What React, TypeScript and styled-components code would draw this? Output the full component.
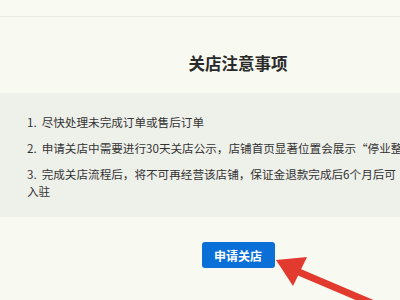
import React from 'react';
import styled, { createGlobalStyle } from 'styled-components';

const GlobalStyle = createGlobalStyle`
  html, body {
    margin: 0;
    padding: 0;
    background: #f8f9f0;
    overflow: hidden;
  }
  body {
    font-family: "Noto Sans CJK SC", "Noto Sans", "Liberation Sans", sans-serif;
    color: #333;
  }
`;

const Page = styled.div`
  position: relative;
  width: 476px;
  height: 300px;
  background: #f8f9f0;
`;

const TopBar = styled.div`
  height: 16px;
  background: #f9faf2;
  border-bottom: 1px solid #ebece3;
`;

const Header = styled.div`
  padding: 36px 0 20px;
  text-align: center;
`;

const Title = styled.h2`
  margin: 0;
  font-size: 16.5px;
  line-height: 20px;
  font-weight: 700;
  color: #2a2a2a;
`;

const NoticePanel = styled.div`
  background: #eef0ea;
  padding: 21px 0 17px 27px;
`;

const NoticeList = styled.ol`
  list-style: none;
  margin: 0;
  padding: 0;
  width: 375px;
  display: flex;
  flex-direction: column;
  gap: 9px;
`;

const NoticeItem = styled.li<{ $nowrap?: boolean }>`
  font-size: 11.6px;
  line-height: 17px;
  color: #333;
  white-space: ${(p) => (p.$nowrap ? 'nowrap' : 'normal')};
`;

const Num = styled.span`
  padding-right: 5px;
`;

const Footer = styled.div`
  display: flex;
  justify-content: center;
  padding-top: 25px;
`;

const ApplyButton = styled.button`
  width: 73px;
  height: 26px;
  border: none;
  border-radius: 3px;
  background: #0b6fd8;
  color: #fff;
  font-family: inherit;
  font-size: 12px;
  font-weight: 700;
  cursor: pointer;
`;

const Arrow = styled.svg`
  position: absolute;
  left: 0;
  top: 0;
  pointer-events: none;
`;

const notices = [
  '尽快处理未完成订单或售后订单',
  '申请关店中需要进行30天关店公示，店铺首页显著位置会展示“停业整顿”',
  '完成关店流程后，将不可再经营该店铺，保证金退款完成后6个月后可入驻',
];

export default function App() {
  return (
    <Page>
      <GlobalStyle />
      <TopBar />
      <Header>
        <Title>关店注意事项</Title>
      </Header>
      <NoticePanel>
        <NoticeList>
          {notices.map((text, i) => (
            <NoticeItem key={i} $nowrap={i === 1}>
              <Num>{i + 1}.</Num>
              {text}
            </NoticeItem>
          ))}
        </NoticeList>
      </NoticePanel>
      <Footer>
        <ApplyButton>申请关店</ApplyButton>
      </Footer>
      <Arrow width="400" height="300" viewBox="0 0 400 300">
        <line x1="294" y1="270" x2="374" y2="304" stroke="#e23a2e" strokeWidth="7" />
        <polygon points="276,260 307,257 293,286" fill="#e23a2e" />
      </Arrow>
    </Page>
  );
}
